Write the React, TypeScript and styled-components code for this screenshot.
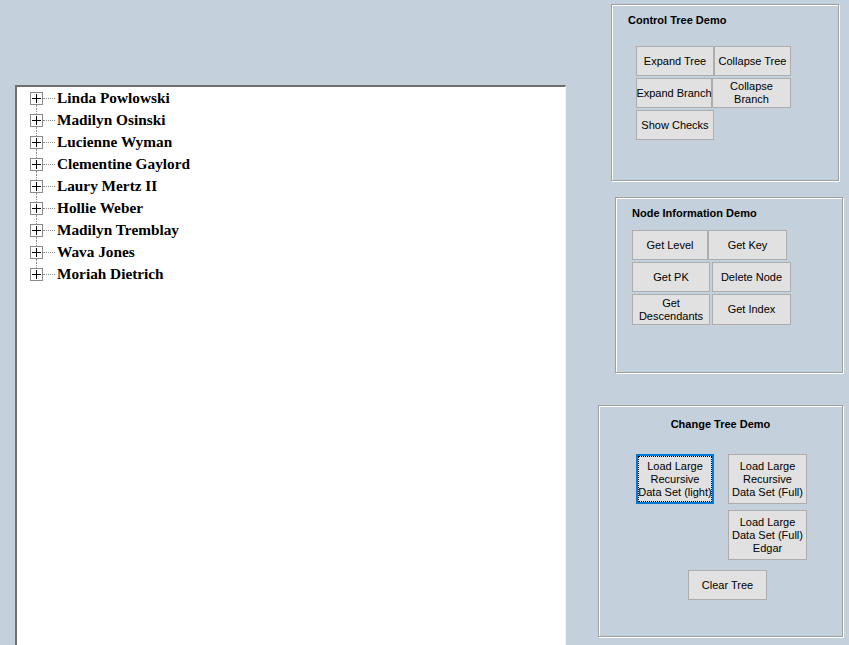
import React from "react";
import styled, { createGlobalStyle } from "styled-components";

const names = [
	"Linda Powlowski",
	"Madilyn Osinski",
	"Lucienne Wyman",
	"Clementine Gaylord",
	"Laury Mertz II",
	"Hollie Weber",
	"Madilyn Tremblay",
	"Wava Jones",
	"Moriah Dietrich",
];

export default function App() {
	return (
		<>
			<GlobalStyle />
			<Page>
				<TreePanel>
					{names.map((name, i) => (
						<TreeRow key={name}>
							<Gutter>
								<LineSegment $visible={i > 0} />
								<Expander>
									<span className="h" />
									<span className="v" />
								</Expander>
								<LineSegment $visible={i < names.length - 1} />
							</Gutter>
							<Connector />
							<NodeText>{name}</NodeText>
						</TreeRow>
					))}
				</TreePanel>

				<SideColumn>
					<DemoBox $left={13} $top={4} $width={228} $height={177}>
						<BoxTitle>Control Tree Demo</BoxTitle>
						<ButtonStack $left={25} $top={19}>
							<ButtonRow>
								<Btn $w={78}>Expand Tree</Btn>
								<Btn $w={77}>Collapse Tree</Btn>
							</ButtonRow>
							<ButtonRow>
								<Btn $w={76}>Expand Branch</Btn>
								<Btn $w={79}>
									Collapse
									<br />
									Branch
								</Btn>
							</ButtonRow>
							<ButtonRow>
								<Btn $w={78}>Show Checks</Btn>
							</ButtonRow>
						</ButtonStack>
					</DemoBox>

					<DemoBox $left={17} $top={16} $width={228} $height={176}>
						<BoxTitle>Node Information Demo</BoxTitle>
						<ButtonStack $left={17} $top={10}>
							<ButtonRow>
								<Btn $w={76}>Get Level</Btn>
								<Btn $w={79}>Get Key</Btn>
							</ButtonRow>
							<ButtonRow $gap={2}>
								<Btn $w={78}>Get PK</Btn>
								<Btn $w={79}>Delete Node</Btn>
							</ButtonRow>
							<ButtonRow $gap={2}>
								<Btn $w={78} $h={31}>
									Get
									<br />
									Descendants
								</Btn>
								<Btn $w={79} $h={31}>
									Get Index
								</Btn>
							</ButtonRow>
						</ButtonStack>
					</DemoBox>

					<DemoBox $left={0} $top={32} $width={245} $height={232}>
						<BoxTitle $center>Change Tree Demo</BoxTitle>
						<ChangeGrid>
							<Btn $w={78} $h={50} $focused>
								Load Large
								<br />
								Recursive
								<br />
								Data Set (light)
							</Btn>
							<Btn $w={79} $h={50}>
								Load Large
								<br />
								Recursive
								<br />
								Data Set (Full)
							</Btn>
							<Btn $w={79} $h={50} className="second-col">
								Load Large
								<br />
								Data Set (Full)
								<br />
								Edgar
							</Btn>
							<Btn $w={79} className="clear">
								Clear Tree
							</Btn>
						</ChangeGrid>
					</DemoBox>
				</SideColumn>
			</Page>
		</>
	);
}

const GlobalStyle = createGlobalStyle`
	html, body {
		margin: 0;
		padding: 0;
		height: 100%;
		background: #c4d0dc;
		overflow: hidden;
	}
	#root {
		height: 100%;
	}
`;

const Page = styled.div`
	display: flex;
	height: 100%;
	background: #c4d0dc;
	font-family: "Liberation Sans", Arial, sans-serif;
`;

const TreePanel = styled.div`
	margin: 85px 0 0 15px;
	width: 551px;
	height: 560px;
	box-sizing: border-box;
	flex-shrink: 0;
	background: #fff;
	border-style: solid;
	border-width: 2px 1px 0 2px;
	border-color: #6f6f6f #f4f4f4 #f4f4f4 #6f6f6f;
	padding-left: 13px;
`;

const TreeRow = styled.div`
	display: flex;
	align-items: center;
	height: 22px;
`;

const Gutter = styled.div`
	display: flex;
	flex-direction: column;
	align-items: flex-start;
	width: 13px;
	height: 100%;
`;

const LineSegment = styled.div<{ $visible: boolean }>`
	flex: 1;
	width: 6px;
	border-right: 1px dotted ${(p) => (p.$visible ? "#8a8a8a" : "transparent")};
`;

const Expander = styled.div`
	position: relative;
	width: 11px;
	height: 11px;
	border: 1px solid #8a8a8a;
	background: #fff;
	flex-shrink: 0;

	.h {
		position: absolute;
		left: 1px;
		top: 5px;
		width: 9px;
		height: 1px;
		background: #000;
	}

	.v {
		position: absolute;
		left: 5px;
		top: 1px;
		width: 1px;
		height: 9px;
		background: #000;
	}
`;

const Connector = styled.div`
	width: 12px;
	margin-top: 1px;
	border-top: 1px dotted #8a8a8a;
	align-self: center;
`;

const NodeText = styled.div`
	margin-left: 2px;
	font-family: "Liberation Serif", "Times New Roman", serif;
	font-weight: bold;
	font-size: 15.3px;
	color: #000;
	white-space: nowrap;
`;

const SideColumn = styled.div`
	display: flex;
	flex-direction: column;
	margin-left: 32px;
	width: 251px;
	flex-shrink: 0;
`;

const DemoBox = styled.div<{ $left: number; $top: number; $width: number; $height: number }>`
	margin-left: ${(p) => p.$left}px;
	margin-top: ${(p) => p.$top}px;
	width: ${(p) => p.$width}px;
	height: ${(p) => p.$height}px;
	box-sizing: border-box;
	border: 1px solid #a0a0a0;
	box-shadow: inset 1px 1px 0 #fff, 1px 1px 0 #fff;
	display: flex;
	flex-direction: column;
`;

const BoxTitle = styled.div<{ $center?: boolean }>`
	font-weight: bold;
	font-size: 11px;
	color: #000;
	padding-top: ${(p) => (p.$center ? 12 : 9)}px;
	padding-left: ${(p) => (p.$center ? 0 : 16)}px;
	text-align: ${(p) => (p.$center ? "center" : "left")};
	line-height: 13px;
`;

const ButtonStack = styled.div<{ $left: number; $top: number }>`
	display: flex;
	flex-direction: column;
	gap: 2px;
	margin-left: ${(p) => p.$left - 1}px;
	margin-top: ${(p) => p.$top}px;
`;

const ButtonRow = styled.div<{ $gap?: number }>`
	display: flex;
	gap: ${(p) => p.$gap ?? 0}px;
`;

const Btn = styled.button<{ $w: number; $h?: number; $focused?: boolean }>`
	width: ${(p) => p.$w}px;
	height: ${(p) => p.$h ?? 30}px;
	box-sizing: border-box;
	margin: 0;
	padding: 0 1px;
	background: #e1e1e1;
	border: ${(p) => (p.$focused ? "2px solid #0078d7" : "1px solid #adadad")};
	${(p) => (p.$focused ? "outline: 1px dotted #000; outline-offset: -3px;" : "")}
	font-family: "Liberation Sans", Arial, sans-serif;
	font-size: 11px;
	line-height: 13px;
	color: #000;
	text-align: center;
	white-space: nowrap;
	display: flex;
	align-items: center;
	justify-content: center;
`;

const ChangeGrid = styled.div`
	display: grid;
	grid-template-columns: 78px 79px;
	column-gap: 14px;
	row-gap: 6px;
	margin-left: 37px;
	margin-top: 23px;

	.second-col {
		grid-column: 2;
	}

	.clear {
		grid-column: 1 / span 2;
		margin-left: 52px;
		margin-top: 4px;
	}
`;
